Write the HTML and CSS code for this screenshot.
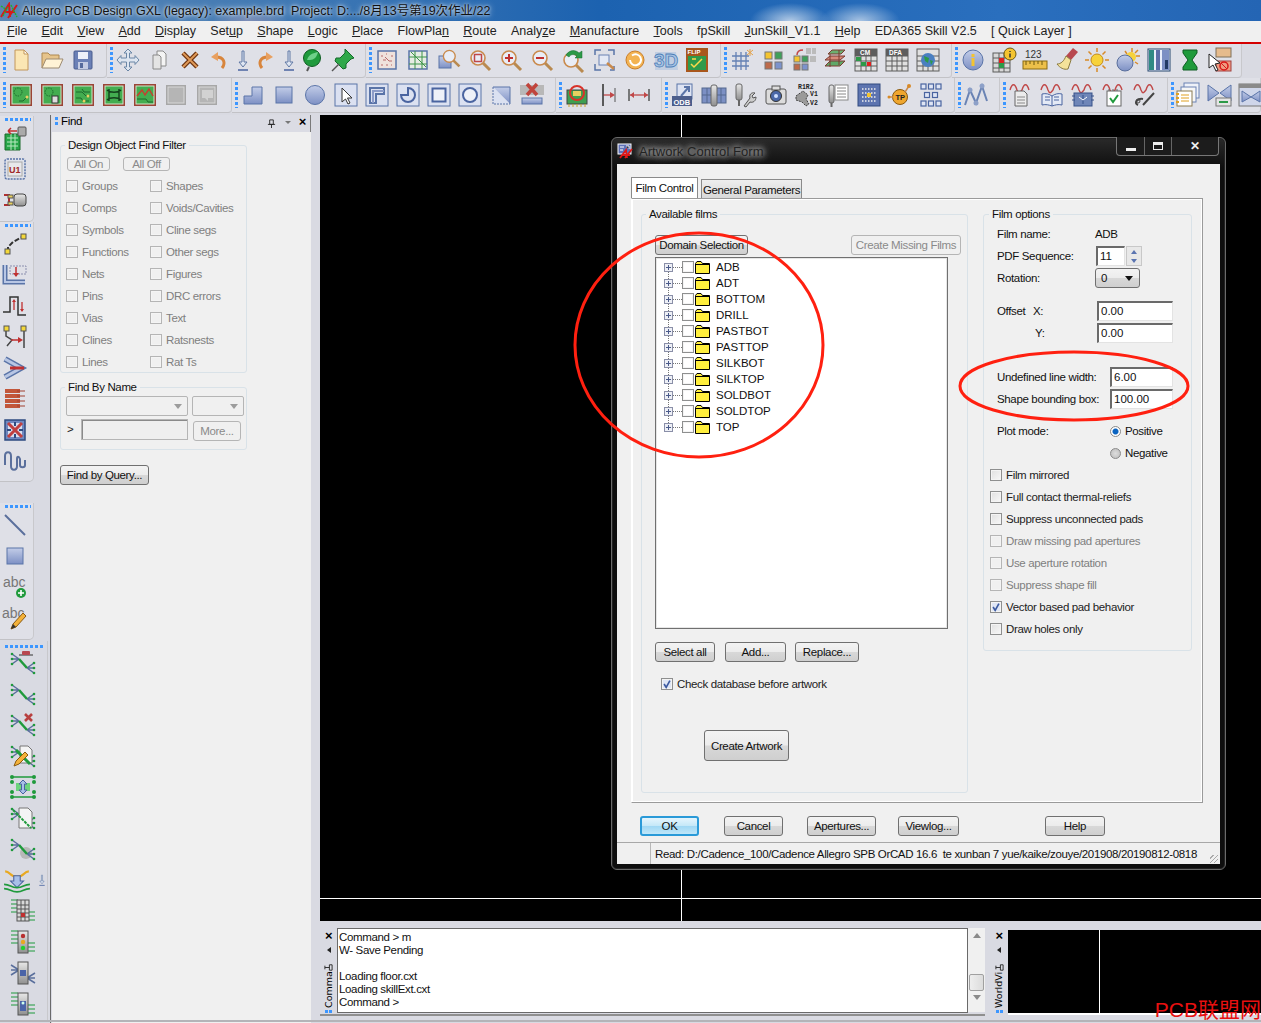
FILE: index.html
```html
<!DOCTYPE html>
<html lang="en">
<head>
<meta charset="utf-8">
<title>Allegro PCB Design GXL</title>
<link rel="stylesheet" href="styles.css">
</head>
<body>
<svg class="defs" aria-hidden="true">
<defs>
<linearGradient id="bl" x1="0" y1="0" x2="0" y2="1"><stop offset="0" stop-color="#c3cde8"/><stop offset="1" stop-color="#7d90c4"/></linearGradient>
<linearGradient id="gr" x1="0" y1="0" x2="0" y2="1"><stop offset="0" stop-color="#e8e8e8"/><stop offset="1" stop-color="#8f8f8f"/></linearGradient>
<symbol id="new" viewBox="0 0 26 26"><path d="M7 3h9l4 4v16H7z" fill="#fbe6b4" stroke="#c2965a"/><path d="M16 3v4h4z" fill="#fff" stroke="#c2965a"/></symbol>
<symbol id="open" viewBox="0 0 26 26"><path d="M3 21V6h6l2 2h9v4" fill="#e6c48c" stroke="#ad8850"/><path d="M3 21l4-9h17l-4 9z" fill="#fff3d6" stroke="#9c8a72"/></symbol>
<symbol id="save" viewBox="0 0 26 26"><rect x="4" y="4" width="18" height="18" rx="1" fill="#6b80b6" stroke="#4a5d8e"/><rect x="8" y="5" width="10" height="7" fill="#eef1fa"/><rect x="8" y="15" width="10" height="7" fill="#c3cbe2"/><rect x="10" y="16" width="3" height="5" fill="#566a9c"/></symbol>
<symbol id="move" viewBox="0 0 26 26"><path d="M13 2l4 4h-2.500v5H20V8.500l4 4.500-4 4.500V15h-5.500v5H17l-4 4-4-4h2.500v-5H6v2.500L2 13l4-4.500V11h5.500V6H9z" fill="#dde5f0" stroke="#6a86a6"/></symbol>
<symbol id="copy" viewBox="0 0 26 26"><path d="M11 4h6l3 3v12h-9z" fill="#f4f4f4" stroke="#8a8a8a"/><path d="M7 8h6l2 2v12H7z" fill="#e4e4e4" stroke="#8a8a8a"/></symbol>
<symbol id="del" viewBox="0 0 26 26"><path d="M6 6l14 14M20 6L6 20" stroke="#6e3410" stroke-width="4.500"/><path d="M6 6l14 14M20 6L6 20" stroke="#e09a58" stroke-width="1.800"/></symbol>
<symbol id="undo" viewBox="0 0 26 26"><path d="M17 21c4-5 2-11-6-11" fill="none" stroke="#d8853c" stroke-width="3"/><path d="M13 5l-7 5 7 4z" fill="#e8a060"/></symbol>
<symbol id="redo" viewBox="0 0 26 26"><path d="M9 21c-4-5-2-11 6-11" fill="none" stroke="#d8853c" stroke-width="3"/><path d="M13 5l7 5-7 4z" fill="#e8a060"/></symbol>
<symbol id="drop" viewBox="0 0 26 26"><path d="M12 4h2v11h3l-4 5-4-5h3z" fill="#dfe6f2" stroke="#6078a4"/><path d="M8 23h10" stroke="#4a65a0" stroke-width="1.500"/></symbol>
<symbol id="leaf" viewBox="0 0 26 26"><circle cx="13" cy="11" r="8.500" fill="#1f9a3c" stroke="#0e5c22"/><path d="M8 13c2-7 8-7 11-8-1 5-4 8-8 8" fill="#6fd08a"/><path d="M10 20l-2 4" stroke="#555" stroke-width="2"/></symbol>
<symbol id="pin" viewBox="0 0 26 26"><path d="M15 2l9 9-3 1-5 5 0 4-3 1-8-8 1-3 4 0 5-5z" fill="#2fa84a" stroke="#146a2a"/><path d="M9 17l-7 7" stroke="#555" stroke-width="1.500"/></symbol>
<symbol id="zr" viewBox="0 0 26 26"><rect x="4" y="4" width="18" height="18" fill="#efe2dc" stroke="#5a74a8" stroke-width="1.500"/><path d="M7 9h2M12 7h1M17 9h2M9 13h3M15 14h3M7 18h2M12 18h2M17 18h1M11 10l4 4" stroke="#b86a6a"/></symbol>
<symbol id="zg" viewBox="0 0 26 26"><rect x="4" y="4" width="18" height="18" fill="#e7ece4" stroke="#5a74a8" stroke-width="1.500"/><path d="M4 10h18M4 17h18M10 4v18M17 4v18M6 5l15 15" stroke="#3d9448"/></symbol>
<symbol id="mag" viewBox="0 0 26 26"><path d="M16 16l7 7" stroke="#b98a50" stroke-width="3"/><circle cx="11" cy="11" r="7" fill="#e9edf6" stroke="#c98a4c" stroke-width="1.600"/></symbol>
<symbol id="mg1" viewBox="0 0 26 26"><rect x="3" y="9" width="12" height="12" fill="url(#bl)" stroke="#5a74a8"/><use href="#mag" x="4" y="0" width="22" height="22"/></symbol>
<symbol id="mg2" viewBox="0 0 26 26"><use href="#mag"/><rect x="7.500" y="7.500" width="7" height="7" fill="none" stroke="#c04848" stroke-width="1.500"/></symbol>
<symbol id="mg3" viewBox="0 0 26 26"><use href="#mag"/><path d="M7 11h8M11 7v8" stroke="#c03030" stroke-width="2"/></symbol>
<symbol id="mg4" viewBox="0 0 26 26"><use href="#mag"/><path d="M7 11h8" stroke="#c03030" stroke-width="2"/></symbol>
<symbol id="mg5" viewBox="0 0 26 26"><use href="#mag" y="2"/><path d="M6 8c4-6 10-5 13-2l3-2v7h-7l2-2c-3-2-6-2-8 1z" fill="#2c9a48" stroke="#176a2e" stroke-width=".5"/></symbol>
<symbol id="mg6" viewBox="0 0 26 26"><path d="M4 8V3h6M17 3h6v5M4 17v6h6M23 19v4h-4" fill="none" stroke="#5a74a8" stroke-width="1.500"/><rect x="8" y="8" width="10" height="10" fill="#e4e9f5" stroke="#6a82b4"/><path d="M16 16l7 6" stroke="#c98a4c" stroke-width="2.500"/></symbol>
<symbol id="back" viewBox="0 0 26 26"><circle cx="13" cy="13" r="9" fill="#f3b352" stroke="#c97e2a"/><path d="M8 13a5.500 5.500 0 1 0 2-4.500" fill="none" stroke="#fff" stroke-width="2"/></symbol>
<symbol id="d3" viewBox="0 0 26 26"><path d="M2 23V5h21l2 18z" fill="#a8c0de" opacity=".55"/><text x="1" y="20" class="t3d">3D</text></symbol>
<symbol id="flip" viewBox="0 0 26 26"><rect x="2" y="1" width="22" height="7" fill="#a8571c"/><text x="3.500" y="7" class="tflip">FLIP</text><rect x="3" y="8" width="20" height="16" fill="#2f9a4a" stroke="#a8571c" stroke-width="2"/><path d="M7 17l3 3 8-8M8 12h4" stroke="#ffd94a" fill="none" stroke-width="1.500"/></symbol>
<symbol id="grid" viewBox="0 0 26 26"><path d="M3 9h17M3 14h17M3 19h17M7 5v18M12 5v18M17 5v18" stroke="#6480b4" stroke-width="1.300"/><path d="M21 2v7M18 3l6 5M24 3l-6 5" stroke="#e3a24a"/></symbol>
<symbol id="col4" viewBox="0 0 26 26"><rect x="5" y="5" width="7" height="7" fill="#f4c430" stroke="#777"/><rect x="15" y="5" width="7" height="7" fill="#3fa05a" stroke="#777"/><rect x="5" y="15" width="7" height="7" fill="#bd6a4a" stroke="#777"/><rect x="15" y="15" width="7" height="7" fill="#7c93cc" stroke="#777"/></symbol>
<symbol id="col6" viewBox="0 0 26 26"><rect x="15" y="1" width="5" height="6" fill="#bbb"/><rect x="21" y="1" width="4" height="6" fill="#bbb"/><rect x="19" y="9" width="6" height="6" fill="#bbb"/><rect x="3" y="9" width="6" height="6" fill="#f4c430" stroke="#777"/><rect x="11" y="9" width="6" height="6" fill="#3fa05a" stroke="#777"/><rect x="3" y="17" width="6" height="6" fill="#bd6a4a" stroke="#777"/><rect x="11" y="17" width="6" height="6" fill="#7c93cc" stroke="#777"/><path d="M6 8c0-4 3-5 6-5" fill="none" stroke="#c04848" stroke-width="1.500"/></symbol>
<symbol id="layers" viewBox="0 0 26 26"><path d="M3 19l5-5h15l-5 5z" fill="#5fa868" stroke="#7c3a30"/><path d="M3 13l5-4h15l-5 4z" fill="#d98a7a" stroke="#7c3a30"/><path d="M6 7l4-4h13l-4 4z" fill="#6cb070" stroke="#7c3a30"/><path d="M8 7v13M17 3v15" stroke="#7c3a30"/></symbol>
<symbol id="tbl" viewBox="0 0 26 26"><rect x="2" y="2" width="22" height="22" fill="#e0e0e0" stroke="#5d5d5d"/><path d="M2 9h22M2 14h22M2 19h22M8 9v15M13 9v15M18 9v15" stroke="#5d5d5d"/></symbol>
<symbol id="cm" viewBox="0 0 26 26"><use href="#tbl"/><rect x="2" y="2" width="22" height="7" fill="#5d5d5d"/><text x="7" y="8.300" class="tw">CM</text><rect x="3" y="10" width="5" height="4" fill="#2c9a48"/><rect x="14" y="15" width="4" height="4" fill="#e02020"/><rect x="8" y="15" width="5" height="4" fill="#2c9a48"/></symbol>
<symbol id="dfa" viewBox="0 0 26 26"><use href="#tbl"/><rect x="2" y="2" width="22" height="7" fill="#5d5d5d"/><text x="5" y="8.300" class="tw">DFA</text></symbol>
<symbol id="gtbl" viewBox="0 0 26 26"><use href="#tbl"/><circle cx="13" cy="13" r="7" fill="#4a7fc0"/><path d="M9 9l5 2-1 5-3-2zM15 13l3 1-2 4z" fill="#2c9a48"/></symbol>
<symbol id="info" viewBox="0 0 26 26"><circle cx="13" cy="13" r="10" fill="url(#bl)" stroke="#5a74a8"/><rect x="11.500" y="7" width="3" height="3" fill="#f4c430"/><rect x="11.500" y="11" width="3" height="8" fill="#f4c430"/></symbol>
<symbol id="tinfo" viewBox="0 0 26 26"><rect x="2" y="6" width="17" height="19" fill="#d8d8d8" stroke="#5d5d5d"/><path d="M2 11h17M2 16h17M2 21h17M8 6v19M13 6v19" stroke="#5d5d5d"/><rect x="8" y="11" width="5" height="5" fill="#e02020"/><rect x="8" y="16" width="5" height="5" fill="#2c9a48"/><circle cx="19" cy="7" r="6" fill="#f4c430" stroke="#6e5a10"/><path d="M19 4v1M19 6.500v4" stroke="#333" stroke-width="1.500"/></symbol>
<symbol id="rule" viewBox="0 0 26 26"><text x="3" y="11" class="t123">123</text><rect x="1" y="14" width="24" height="8" fill="#edc04a" stroke="#8a6a10"/><path d="M4 14v4M8 14v3M12 14v4M16 14v3M20 14v4" stroke="#6e5a10"/></symbol>
<symbol id="broom" viewBox="0 0 26 26"><path d="M20 1l5 4-7 8-5-4z" fill="#b84850"/><path d="M13 9l5 4-3 9c-4 1-8-1-11-5 4 0 7-3 9-8z" fill="#f4e29a" stroke="#8a7a40"/></symbol>
<symbol id="sun" viewBox="0 0 26 26"><circle cx="13" cy="13" r="6" fill="#f7d23a" stroke="#c48a1c"/><path d="M13 1v4M13 21v4M1 13h4M21 13h4M4.500 4.500l3 3M18.500 18.500l3 3M21.500 4.500l-3 3M4.500 21.500l3-3" stroke="#d88a28" stroke-width="1.500"/></symbol>
<symbol id="bulb" viewBox="0 0 26 26"><path d="M17 1v4M25 9h-4M10 4l2 3M23 3l-3 3M23 17l-3-2" stroke="#d88a28" stroke-width="1.500"/><circle cx="16" cy="10" r="5" fill="#f7d23a"/><circle cx="10" cy="16" r="8" fill="url(#bl)" stroke="#5a6f9c"/></symbol>
<symbol id="bars" viewBox="0 0 26 26"><rect x="2" y="2" width="22" height="22" fill="#e8eefb" stroke="#27466f"/><rect x="3" y="3" width="5" height="20" fill="#2f8a84"/><rect x="10" y="3" width="4" height="20" fill="#5c6fa8"/><rect x="16" y="3" width="7" height="20" fill="#7c90c4"/><rect x="19" y="13" width="3" height="9" fill="#223a64"/></symbol>
<symbol id="hour" viewBox="0 0 26 26"><path d="M6 3h14v3l-5 7 5 7v3H6v-3l5-7-5-7z" fill="#1f9a3c" stroke="#0e5c22"/></symbol>
<symbol id="stop" viewBox="0 0 26 26"><rect x="8" y="1" width="15" height="9" fill="#e6bb8c" stroke="#80705a"/><rect x="8" y="14" width="15" height="10" fill="#ee9a80" stroke="#a04040"/><circle cx="16" cy="19" r="4" fill="none" stroke="#d81818" stroke-width="1.500"/><path d="M13 16l6 6" stroke="#d81818"/><path d="M1 7v14l4-3 3 6 2-1-3-6 5-1z" fill="#fff" stroke="#222"/></symbol>
<symbol id="bd" viewBox="0 0 26 26"><rect x="2" y="2" width="22" height="22" fill="#9a4436"/><rect x="4" y="4" width="18" height="18" fill="#43ad50" stroke="#cfe4c8"/></symbol>
<symbol id="b1" viewBox="0 0 26 26"><use href="#bd"/><circle cx="10" cy="10" r="4" fill="none" stroke="#1c6a2c" stroke-dasharray="1.500 1"/><path d="M11 19h4l4-4" stroke="#1c6a2c" fill="none"/><circle cx="19" cy="15" r="1.500" fill="#e8d060"/></symbol>
<symbol id="b2" viewBox="0 0 26 26"><use href="#bd"/><circle cx="10" cy="10" r="4" fill="none" stroke="#1c6a2c" stroke-dasharray="1.500 1"/><rect x="13" y="14" width="6" height="7" fill="#ddd" stroke="#333"/></symbol>
<symbol id="b3" viewBox="0 0 26 26"><use href="#bd"/><path d="M6 10h6l4 4h4M6 16h5l2 3h6M12 7l2 3h6" stroke="#1c6a2c" fill="none"/><circle cx="18" cy="14" r="1.500" fill="#e8d060"/><circle cx="14" cy="19" r="1.500" fill="#e8d060"/></symbol>
<symbol id="b4" viewBox="0 0 26 26"><use href="#bd"/><path d="M6 8c3 3 11 3 14 0M6 18c3-3 11-3 14 0M8 7v12M18 7v12" stroke="#14401c" fill="none" stroke-width="1.400"/></symbol>
<symbol id="b5" viewBox="0 0 26 26"><use href="#bd"/><path d="M5 14l5-6 3 5 4-6 4 7" stroke="#c83c30" fill="none" stroke-width="1.400"/><path d="M5 17h9l2 3h5" stroke="#1c6a2c" fill="none"/></symbol>
<symbol id="g1" viewBox="0 0 26 26"><rect x="3" y="3" width="20" height="20" fill="#a7a7a7"/><rect x="5" y="5" width="16" height="16" fill="#b5b5b5" stroke="#d8d8d8"/></symbol>
<symbol id="g2" viewBox="0 0 26 26"><use href="#g1"/><path d="M8 8h11v8h-5v3l-3-3H8z" fill="#d2d2d2"/></symbol>
<symbol id="sL" viewBox="0 0 26 26"><path d="M4 22V14h8V5h10v17z" fill="url(#bl)" stroke="#5a74a8"/></symbol>
<symbol id="sS" viewBox="0 0 26 26"><rect x="5" y="5" width="16" height="16" fill="url(#bl)" stroke="#5a74a8"/></symbol>
<symbol id="sC" viewBox="0 0 26 26"><circle cx="13" cy="13" r="9.500" fill="url(#bl)" stroke="#5a74a8"/></symbol>
<symbol id="sel" viewBox="0 0 26 26"><rect x="2" y="2" width="22" height="22" fill="#dbe1f1" stroke="#5a74a8"/><path d="M9 6v14l3.500-3 2.500 5 2-1-2.500-5H19z" fill="#fff" stroke="#333"/></symbol>
<symbol id="fr" viewBox="0 0 26 26"><rect x="2" y="2" width="22" height="22" fill="#dbe1f1" stroke="#5a74a8"/></symbol>
<symbol id="sN" viewBox="0 0 26 26"><use href="#fr"/><path d="M6 21V6h14v6H12v9z" fill="none" stroke="#5a74a8" stroke-width="2"/><path d="M9 21V9h11" fill="none" stroke="#8c9cc8" stroke-width="2"/></symbol>
<symbol id="sP" viewBox="0 0 26 26"><use href="#fr"/><path d="M13 6a7 7 0 1 1-7 7h7z" fill="none" stroke="#4a64a0" stroke-width="2"/></symbol>
<symbol id="sH" viewBox="0 0 26 26"><use href="#fr"/><rect x="6.500" y="6.500" width="13" height="13" fill="#eef1f8" stroke="#4a64a0" stroke-width="2"/></symbol>
<symbol id="sO" viewBox="0 0 26 26"><use href="#fr"/><circle cx="13" cy="13" r="7" fill="#eef1f8" stroke="#4a64a0" stroke-width="2"/></symbol>
<symbol id="sD" viewBox="0 0 26 26"><path d="M5 5h17v17z" fill="url(#bl)"/><path d="M5 5v17h17" fill="#dbe1f1" stroke="#5a74a8" stroke-dasharray="2 1"/><path d="M5 5h17v17" fill="none" stroke="#5a74a8"/></symbol>
<symbol id="sX" viewBox="0 0 26 26"><rect x="1" y="3" width="24" height="10" fill="#b8b8b8"/><rect x="3" y="16" width="20" height="6" fill="url(#bl)" stroke="#5a74a8"/><path d="M8 2l10 11M18 2L8 13" stroke="#c0443c" stroke-width="3.500"/></symbol>
<symbol id="chip" viewBox="0 0 26 26"><rect x="3" y="8" width="20" height="14" fill="#3fa050" stroke="#444"/><path d="M5 22v3M9 22v3M13 22v3M17 22v3M21 22v3" stroke="#c8a428"/><ellipse cx="13" cy="11" rx="7" ry="7" fill="none" stroke="#d8322a" stroke-width="2"/><rect x="9" y="9" width="8" height="5" fill="#e8d060"/></symbol>
<symbol id="dimv" viewBox="0 0 26 26"><path d="M8 2v22M20 6v14" stroke="#555" fill="none"/><path d="M8 13h10" stroke="#c04848" stroke-width="1.300"/><path d="M15 10l5 3-5 3z" fill="#c04848"/><path d="M8 2v22" stroke="#444" stroke-width="1.500"/></symbol>
<symbol id="dimh" viewBox="0 0 26 26"><path d="M3 7v12M23 7v12" stroke="#555" stroke-width="1.500"/><path d="M4 13h18" stroke="#c04848" stroke-width="1.300"/><path d="M8 10l-4 3 4 3zM18 10l4 3-4 3z" fill="#c04848"/></symbol>
<symbol id="odb" viewBox="0 0 26 26"><rect x="7" y="2" width="15" height="15" fill="#dde3f2" stroke="#5a74a8"/><path d="M11 14l7-8M14 5h5v5" stroke="#5a74a8" stroke-width="2" fill="none"/><rect x="2" y="14" width="20" height="10" fill="#4c5e8c"/><text x="3.500" y="22.500" class="todb">ODB</text></symbol>
<symbol id="split" viewBox="0 0 26 26"><rect x="1" y="6" width="10" height="15" fill="#7c90c4" stroke="#54688f"/><rect x="15" y="6" width="10" height="15" fill="#7c90c4" stroke="#54688f"/><path d="M1 13h10M15 13h10M6 6v15M20 6v15" stroke="#54688f"/><rect x="10" y="3" width="6" height="21" rx="2" fill="url(#gr)" stroke="#666"/></symbol>
<symbol id="wr" viewBox="0 0 26 26"><rect x="4" y="2" width="6" height="16" rx="2" fill="url(#gr)" stroke="#666"/><path d="M7 18v6" stroke="#666" stroke-width="2"/><path d="M12 24l6-8c-1-3 1-6 5-5l-3 3 1 2 3-1c0 4-3 6-6 5l-4 5z" fill="#ccc" stroke="#555"/></symbol>
<symbol id="cam" viewBox="0 0 26 26"><rect x="3" y="7" width="20" height="15" rx="2" fill="#dcdcdc" stroke="#555"/><rect x="9" y="4" width="8" height="4" fill="#dcdcdc" stroke="#555"/><circle cx="13" cy="14" r="5.500" fill="#4a68a8" stroke="#333"/><circle cx="13" cy="14" r="2" fill="#cfe0ff"/></symbol>
<symbol id="rv" viewBox="0 0 26 26"><text x="4" y="7" class="tsm">R1R2</text><text x="16" y="14" class="tsm">V1</text><text x="16" y="23" class="tsm">V2</text><path d="M2 14l7-5 5 4-2 4 3 5-3 2-4-4-6-2z" fill="#9a9a9a" stroke="#444" stroke-dasharray="2 1"/></symbol>
<symbol id="lst" viewBox="0 0 26 26"><rect x="4" y="3" width="5" height="18" rx="2" fill="url(#gr)" stroke="#666"/><path d="M6.500 21v4" stroke="#666" stroke-width="2"/><rect x="10" y="3" width="13" height="15" fill="#fff" stroke="#888"/><path d="M12 6h9M12 9h9M12 12h9M12 15h9" stroke="#888"/></symbol>
<symbol id="dots" viewBox="0 0 26 26"><rect x="2" y="2" width="22" height="22" fill="#5d74b0" stroke="#324a80"/><path d="M6 7h14M6 11h14M6 15h14M6 19h14" stroke="#eee" stroke-width="1.500" stroke-dasharray="1.500 1.500"/><path d="M11 11h4v4h-4z" fill="#f4c430"/></symbol>
<symbol id="tp" viewBox="0 0 26 26"><circle cx="13" cy="15" r="7.500" fill="#efa62e" stroke="#8a5a10"/><text x="8.500" y="18" class="ttp">TP</text><path d="M18 10l4-6M2 15h4" stroke="#c98a4c" stroke-width="1.500"/><circle cx="22" cy="4" r="2" fill="#d88a28"/><circle cx="2" cy="15" r="1.500" fill="#d88a28"/></symbol>
<symbol id="nine" viewBox="0 0 26 26"><g fill="#dfe5f4" stroke="#4a64a0" stroke-width="1.200"><rect x="3" y="2" width="5" height="5"/><rect x="10.500" y="2" width="5" height="5"/><rect x="18" y="2" width="5" height="5"/><rect x="6.500" y="10.500" width="5" height="5"/><rect x="14.500" y="10.500" width="5" height="5"/><rect x="3" y="19" width="5" height="5"/><rect x="10.500" y="19" width="5" height="5"/><rect x="18" y="19" width="5" height="5"/></g></symbol>
<symbol id="nl" viewBox="0 0 26 26"><path d="M2 23l5-15 6 13 6-17 5 15" fill="none" stroke="#6a83b4" stroke-width="2"/><g fill="#8da0c8"><circle cx="7" cy="8" r="2.500"/><circle cx="13" cy="21" r="2.500"/><circle cx="19" cy="4" r="2.500"/></g></symbol>
<symbol id="sine" viewBox="0 0 26 26"><path d="M2 8c2-7 5-7 7 0 2 5 3 2 5 0 2-7 5-7 7 0" fill="none" stroke="#c04848" stroke-width="1.400"/></symbol>
<symbol id="si1" viewBox="0 0 26 26"><use href="#sine"/><path d="M7 9h9l3 3v12H7z" fill="#ececec" stroke="#666"/><path d="M9 15h8M9 18h8M9 21h8" stroke="#888"/></symbol>
<symbol id="si2" viewBox="0 0 26 26"><use href="#sine"/><path d="M3 12c4-1 7 0 10 2 3-2 6-3 10-2v11c-4-1-7 0-10 1-3-1-6-2-10-1z" fill="#e4eaf6" stroke="#4a64a0"/><path d="M13 14v10M6 15h5M6 18h5M15 15h5M15 18h5" stroke="#4a64a0"/></symbol>
<symbol id="si3" viewBox="0 0 26 26"><use href="#sine"/><rect x="4" y="11" width="18" height="13" fill="#6f86b8" stroke="#39528a"/><path d="M2 14h3M2 18h3M21 14h3M21 18h3M13 13v9" stroke="#39528a"/><path d="M9 15l4 3 4-3" fill="none" stroke="#fff"/></symbol>
<symbol id="si4" viewBox="0 0 26 26"><use href="#sine"/><rect x="6" y="9" width="14" height="15" fill="#fff" stroke="#666"/><path d="M9 16l3 4 5-7" fill="none" stroke="#1f9a3c" stroke-width="2"/><path d="M8 9V7M12 9V7M16 9V7" stroke="#666"/></symbol>
<symbol id="si5" viewBox="0 0 26 26"><use href="#sine"/><path d="M22 11L11 23M6 23c-5-2 0-7 5-6" fill="none" stroke="#444" stroke-width="2"/><circle cx="6" cy="19" r="2" fill="none" stroke="#444"/></symbol>
<symbol id="nb" viewBox="0 0 26 26"><rect x="8" y="1" width="15" height="15" fill="#eef1f8" stroke="#6a82b4"/><rect x="5" y="5" width="15" height="15" fill="#f6f6f6" stroke="#6a82b4"/><rect x="1" y="9" width="15" height="15" fill="#fff" stroke="#8a7a50"/><path d="M3 12h-3M3 16h-3M3 20h-3" stroke="#e0a020" stroke-width="2"/><path d="M5 13h8M5 16h8M5 19h8" stroke="#e0a020"/></symbol>
<symbol id="bow" viewBox="0 0 26 26"><path d="M1 3l11 8L1 19zM24 3l-11 8 11 8z" fill="url(#bl)" stroke="#5a74a8"/><rect x="9" y="16" width="15" height="8" fill="#e4e4e4" stroke="#777"/><rect x="12" y="19" width="9" height="2" fill="#2c9a48"/></symbol>
<symbol id="win" viewBox="0 0 26 26"><rect x="1" y="2" width="24" height="22" fill="#cfd6ea" stroke="#777"/><rect x="1" y="2" width="24" height="4" fill="#8a8a8a"/><path d="M4 9l9 6 9-6v11l-9-5-9 5z" fill="url(#bl)" stroke="#5a74a8"/></symbol>
<symbol id="l1" viewBox="0 0 26 26"><path d="M3 9h15v16H3z" fill="#26a548" stroke="#1c6a2c"/><path d="M5 13h11M5 17h11M5 21h11M9 9v16M13 9v16" stroke="#b8e8c0"/><rect x="16" y="2" width="8" height="9" rx="1" fill="#aaa" stroke="#555"/><path d="M6 6h9M6 6l3-3M6 6l3 3" stroke="#c03030" fill="none" stroke-width="1.500"/></symbol>
<symbol id="l2" viewBox="0 0 26 26"><rect x="3" y="3" width="20" height="20" rx="2" fill="#dfe2ea" stroke="#5a74a8" stroke-dasharray="2 1" stroke-width="1.500"/><rect x="6" y="6" width="14" height="14" fill="#e8e8ea" stroke="#aaa"/><text x="7" y="16.500" class="tu1">U1</text></symbol>
<symbol id="l3" viewBox="0 0 26 26"><rect x="12" y="7" width="12" height="12" rx="3" fill="url(#gr)" stroke="#444"/><path d="M2 8h5v10H2" fill="none" stroke="#b03030" stroke-width="2"/><rect x="6" y="8" width="5" height="3" fill="#e8d060" stroke="#555"/><rect x="6" y="15" width="5" height="3" fill="#e8d060" stroke="#555"/></symbol>
<symbol id="l4" viewBox="0 0 26 26"><path d="M6 21v-5l5-5 9-5" fill="none" stroke="#333" stroke-width="2" stroke-dasharray="5 2"/><rect x="3" y="18" width="5" height="5" fill="#f4d83a" stroke="#555"/><rect x="19" y="3" width="5" height="5" fill="#f4d83a" stroke="#555"/></symbol>
<symbol id="l5" viewBox="0 0 26 26"><path d="M3 3v17h20" fill="none" stroke="#5a74a8" stroke-width="5"/><path d="M3 3v17h20" fill="none" stroke="#b8c6e4" stroke-width="2"/><rect x="8" y="4" width="16" height="8" fill="none" stroke="#8b8fae" stroke-dasharray="2 1"/><path d="M14 5v9" stroke="#c03030" stroke-width="1.500"/><path d="M11 11l3 4 3-4z" fill="#c03030"/></symbol>
<symbol id="l6" viewBox="0 0 26 26"><path d="M1 19h7V4h8v18h8" fill="none" stroke="#333" stroke-width="1.500"/><path d="M12 17V8M20 9v9" stroke="#c03030" stroke-width="1.300"/><path d="M10 9l2-3 2 3zM18 16l2 3 2-3z" fill="#c03030"/></symbol>
<symbol id="l7" viewBox="0 0 26 26"><path d="M4 6v6l6 4-5 6M22 6v18" fill="none" stroke="#444" stroke-width="1.500"/><path d="M9 16h10" stroke="#c03030" stroke-width="1.500"/><path d="M16 13l5 3-5 3z" fill="#c03030"/><rect x="2" y="2" width="5" height="5" fill="#f4d83a" stroke="#555"/><rect x="19" y="2" width="5" height="5" fill="#f4d83a" stroke="#555"/></symbol>
<symbol id="l8" viewBox="0 0 26 26"><path d="M3 4l16 9-16 9" fill="none" stroke="#5a74a8" stroke-width="6"/><path d="M3 4l16 9-16 9" fill="none" stroke="#b8c6e4" stroke-width="3"/><path d="M8 13h14" stroke="#c03030" stroke-width="3"/></symbol>
<symbol id="l9" viewBox="0 0 26 26"><path d="M3 5h15M3 10h15M3 15h15M3 20h15" stroke="#c2563a" stroke-width="4"/><path d="M15 5h8M15 10h8M15 15h8M15 20h8" stroke="#a04030"/></symbol>
<symbol id="l10" viewBox="0 0 26 26"><rect x="3" y="3" width="20" height="20" fill="#7088c0" stroke="#2e4a80" stroke-width="1.500"/><rect x="6" y="6" width="14" height="14" fill="#d6def0"/><path d="M6 6l14 14M20 6L6 20" stroke="#c04040" stroke-width="3"/><path d="M5 13h4M17 13h4M13 5v4M13 17v4" stroke="#2e4a80" stroke-width="2"/></symbol>
<symbol id="l11" viewBox="0 0 26 26"><path d="M3 17V8c0-5 6-5 6 0v10c0 5 6 5 6 0v-7c0-3 2-3 3 0v6c0 3 5 3 5 0v-5" fill="none" stroke="#5a6f9c" stroke-width="2"/></symbol>
<symbol id="ln" viewBox="0 0 26 26"><path d="M3 3l20 20" stroke="#5a6f9c" stroke-width="2"/></symbol>
<symbol id="ab1" viewBox="0 0 26 26"><text x="1" y="13" class="tabc">abc</text><circle cx="19" cy="19" r="5" fill="#1f9a3c"/><path d="M16 19h6M19 16v6" stroke="#fff" stroke-width="1.600"/></symbol>
<symbol id="pen" viewBox="0 0 26 26"><path d="M9 24l2-5 10-11 3 3-10 11z" fill="#f4b23a" stroke="#8a5a10"/><path d="M9 24l2-5 3 3z" fill="#333"/></symbol>
<symbol id="ab2" viewBox="0 0 26 26"><text x="0" y="13" class="tabc">abc</text><use href="#pen"/></symbol>
<symbol id="net" viewBox="0 0 26 26"><g stroke="#5a6f9c" stroke-width="1.500" fill="none"><path d="M2 4l7 5M2 9h7M2 14l7-5M24 13l-7 5M24 18h-7M24 23l-7-5"/></g><path d="M9 9l8 9" stroke="#1f9a3c" stroke-width="2.500"/><g fill="#1f9a3c"><circle cx="2" cy="4" r="1.300"/><circle cx="2" cy="9" r="1.300"/><circle cx="2" cy="14" r="1.300"/><circle cx="24" cy="13" r="1.300"/><circle cx="24" cy="18" r="1.300"/><circle cx="24" cy="23" r="1.300"/></g></symbol>
<symbol id="n1" viewBox="0 0 26 26"><use href="#net"/><path d="M9 5h14" stroke="#333" stroke-width="1"/><rect x="12" y="1" width="8" height="4" rx="1" fill="#b84850"/></symbol>
<symbol id="n3" viewBox="0 0 26 26"><use href="#net"/><path d="M15 2l7 7M22 2l-7 7" stroke="#b84040" stroke-width="2.600"/></symbol>
<symbol id="n4" viewBox="0 0 26 26"><use href="#net"/><path d="M10 3h8l4 4v13H10z" fill="#f4f4f4" stroke="#777"/><path d="M6 7l14 14" stroke="#1f9a3c" stroke-width="3"/><path d="M4 23l2-5 9-9 3 3-9 9z" fill="#f4b23a" stroke="#8a5a10"/></symbol>
<symbol id="n5" viewBox="0 0 26 26"><path d="M2 3h22M2 23h22" stroke="#1f9a3c" stroke-width="1.500"/><g fill="#1f9a3c"><circle cx="2" cy="3" r="2"/><circle cx="2" cy="8" r="2"/><circle cx="2" cy="18" r="2"/><circle cx="2" cy="23" r="2"/><circle cx="24" cy="3" r="2"/><circle cx="24" cy="8" r="2"/><circle cx="24" cy="18" r="2"/><circle cx="24" cy="23" r="2"/></g><path d="M6 9h14v8H6z" fill="#6cd47c"/><path d="M13 6l4 4h-2.500v6H17l-4 4-4-4h2.500v-6H9z" fill="#a8c0e8" stroke="#4a64a0"/></symbol>
<symbol id="n6" viewBox="0 0 26 26"><use href="#net"/><path d="M9 3h9l4 4v16H9z" fill="#f4f4f4" stroke="#777"/><path d="M3 5l18 18" stroke="#1f9a3c" stroke-width="2" stroke-dasharray="3 1"/></symbol>
<symbol id="n7" viewBox="0 0 26 26"><circle cx="16" cy="17" r="6" fill="#b8b8b8"/><use href="#net"/></symbol>
<symbol id="n8" viewBox="0 0 26 26"><path d="M2 5c5 0 4 5 11 5s6-5 11-5" fill="none" stroke="#e8a820" stroke-width="2"/><path d="M10 9h6v5h3l-6 6-6-6h3z" fill="#a8c0e8" stroke="#4a64a0"/><path d="M1 17c6 0 6 3 12 3s6-3 12-3M1 21c6 0 6 3 12 3s6-3 12-3" fill="none" stroke="#1f9a3c" stroke-width="1.600"/></symbol>
<symbol id="fan" viewBox="0 0 26 26"><g stroke="#1f9a3c" stroke-width="1.200" fill="#1f9a3c"><path d="M1 2h7M1 6h7M1 10h7M1 14h7M18 14h7M18 18h7M18 22h7"/></g></symbol>
<symbol id="n9" viewBox="0 0 26 26"><use href="#fan"/><rect x="7" y="2" width="12" height="21" fill="#d8d8d8" stroke="#555"/><path d="M7 7h12M7 11h12M7 15h12M7 19h12M11 2v21M15 2v21" stroke="#555"/><rect x="11" y="15" width="4" height="4" fill="#c03030"/></symbol>
<symbol id="n10" viewBox="0 0 26 26"><use href="#fan"/><rect x="8" y="2" width="10" height="22" fill="url(#gr)" stroke="#555"/><circle cx="13" cy="7" r="2.200" fill="#b83030"/><circle cx="13" cy="13" r="2.200" fill="#e8a820"/><circle cx="13" cy="19" r="2.200" fill="#22d030"/></symbol>
<symbol id="n11" viewBox="0 0 26 26"><g stroke="#5a6f9c" stroke-width="1.500"><path d="M1 5l8 5M1 10h8M1 15l8-5M25 13l-8 5M25 18h-8M25 23l-8-5"/></g><rect x="8" y="2" width="10" height="22" fill="url(#gr)" stroke="#555"/><rect x="10" y="10" width="6" height="6" fill="#4a64a8"/></symbol>
<symbol id="n12" viewBox="0 0 26 26"><use href="#fan"/><rect x="8" y="2" width="10" height="22" fill="url(#gr)" stroke="#555"/><rect x="10" y="10" width="6" height="10" fill="#4a64a8"/><circle cx="13" cy="12" r="1.500" fill="#cfe"/></symbol>
<symbol id="chk" viewBox="0 0 12 12"><path d="M2.500 6l2.500 4 4.500-8" fill="none" stroke="#3c5aa0" stroke-width="2"/></symbol>
<symbol id="foldr" viewBox="0 0 15 13"><path d="M.5 12.500V2.500l1.500-2h4l1.500 2h7v10z" fill="#ffef3e" stroke="#000"/><path d="M.5 3.500h14" stroke="#000"/></symbol>
<symbol id="logo" viewBox="0 0 18 18"><path d="M1 15L9 2l1 13M5 10h10M8 16l9-13" fill="none" stroke="#d81818" stroke-width="2"/><path d="M1 4l6 4M3 14l5-9M11 3l6 12" fill="none" stroke="#20b030" stroke-width="1.500" stroke-dasharray="2 1"/></symbol>
<symbol id="dlogo" viewBox="0 0 16 16"><rect x="1" y="1" width="13" height="10" fill="#6072b8" stroke="#fff"/><path d="M3 4h4M3 7h3M9 3h3v3" stroke="#fff"/><path d="M3 15L9 7l1 8M5 12h8M8 15l7-9" fill="none" stroke="#e01818" stroke-width="1.800"/></symbol>
</defs>
</svg>

<div class="app">
  <header class="titlebar">
    <svg class="tlogo"><use href="#logo"/></svg>
    <span class="ttext">Allegro PCB Design GXL (legacy): example.brd&nbsp; Project: D:.../8月13号第19次作业/22</span>
  </header>
  <nav class="menubar">
    <span class="m m0"><u>F</u>ile</span><span class="m"><u>E</u>dit</span><span class="m"><u>V</u>iew</span><span class="m"><u>A</u>dd</span><span class="m"><u>D</u>isplay</span><span class="m">Set<u>u</u>p</span><span class="m"><u>S</u>hape</span><span class="m"><u>L</u>ogic</span><span class="m"><u>P</u>lace</span><span class="m">FlowPla<u>n</u></span><span class="m"><u>R</u>oute</span><span class="m">Analy<u>z</u>e</span><span class="m"><u>M</u>anufacture</span><span class="m"><u>T</u>ools</span><span class="m">fpSkill</span><span class="m"><u>J</u>unSkill_V1.1</span><span class="m"><u>H</u>elp</span><span class="m">EDA365 Skill V2.5</span><span class="m">[ Quick Layer ]</span>
  </nav>
  <div class="toolbars">
    <div class="tbrow r1">
      <div class="grp g1a"><i class="hd"></i><span class="b"><svg class="ic"><use href="#new"/></svg></span><span class="b"><svg class="ic"><use href="#open"/></svg></span><span class="b"><svg class="ic"><use href="#save"/></svg></span></div>
      <div class="grp g1b"><i class="hd"></i><span class="b"><svg class="ic"><use href="#move"/></svg></span><span class="b"><svg class="ic"><use href="#copy"/></svg></span><span class="b"><svg class="ic"><use href="#del"/></svg></span><span class="b w26"><svg class="ic"><use href="#undo"/></svg></span><span class="b w23"><svg class="ic"><use href="#drop"/></svg></span><span class="b w23"><svg class="ic"><use href="#redo"/></svg></span><span class="b w23"><svg class="ic"><use href="#drop"/></svg></span><span class="b w23"><svg class="ic"><use href="#leaf"/></svg></span><span class="b w39"><svg class="ic"><use href="#pin"/></svg></span></div>
      <div class="grp g1c"><i class="hd"></i><span class="b"><svg class="ic"><use href="#zr"/></svg></span><span class="b"><svg class="ic"><use href="#zg"/></svg></span><span class="b"><svg class="ic"><use href="#mg1"/></svg></span><span class="b"><svg class="ic"><use href="#mg2"/></svg></span><span class="b"><svg class="ic"><use href="#mg3"/></svg></span><span class="b"><svg class="ic"><use href="#mg4"/></svg></span><span class="b"><svg class="ic"><use href="#mg5"/></svg></span><span class="b"><svg class="ic"><use href="#mg6"/></svg></span><span class="b"><svg class="ic"><use href="#back"/></svg></span><span class="b"><svg class="ic"><use href="#d3"/></svg></span><span class="b"><svg class="ic"><use href="#flip"/></svg></span></div>
      <div class="grp g1d"><i class="hd"></i><span class="b"><svg class="ic"><use href="#grid"/></svg></span><span class="b"><svg class="ic"><use href="#col4"/></svg></span><span class="b"><svg class="ic"><use href="#col6"/></svg></span><span class="b"><svg class="ic"><use href="#layers"/></svg></span><span class="b"><svg class="ic"><use href="#cm"/></svg></span><span class="b"><svg class="ic"><use href="#dfa"/></svg></span><span class="b"><svg class="ic"><use href="#gtbl"/></svg></span></div>
      <div class="grp g1e"><i class="hd"></i><span class="b"><svg class="ic"><use href="#info"/></svg></span><span class="b"><svg class="ic"><use href="#tinfo"/></svg></span><span class="b"><svg class="ic"><use href="#rule"/></svg></span><span class="b"><svg class="ic"><use href="#broom"/></svg></span><span class="b"><svg class="ic"><use href="#sun"/></svg></span><span class="b"><svg class="ic"><use href="#bulb"/></svg></span><span class="b"><svg class="ic"><use href="#bars"/></svg></span><span class="b"><svg class="ic"><use href="#hour"/></svg></span><span class="b"><svg class="ic"><use href="#stop"/></svg></span></div>
    </div>
    <div class="tbrow r2">
      <div class="grp g2a"><i class="hd"></i><span class="b"><svg class="ic"><use href="#b1"/></svg></span><span class="b"><svg class="ic"><use href="#b2"/></svg></span><span class="b"><svg class="ic"><use href="#b3"/></svg></span><span class="b"><svg class="ic"><use href="#b4"/></svg></span><span class="b"><svg class="ic"><use href="#b5"/></svg></span><span class="b"><svg class="ic"><use href="#g1"/></svg></span><span class="b"><svg class="ic"><use href="#g2"/></svg></span></div>
      <div class="grp g2b"><i class="hd"></i><span class="b"><svg class="ic"><use href="#sL"/></svg></span><span class="b"><svg class="ic"><use href="#sS"/></svg></span><span class="b"><svg class="ic"><use href="#sC"/></svg></span><span class="b"><svg class="ic"><use href="#sel"/></svg></span><span class="b"><svg class="ic"><use href="#sN"/></svg></span><span class="b"><svg class="ic"><use href="#sP"/></svg></span><span class="b"><svg class="ic"><use href="#sH"/></svg></span><span class="b"><svg class="ic"><use href="#sO"/></svg></span><span class="b"><svg class="ic"><use href="#sD"/></svg></span><span class="b"><svg class="ic"><use href="#sX"/></svg></span></div>
      <div class="grp g2c"><i class="hd"></i><span class="b"><svg class="ic"><use href="#chip"/></svg></span><span class="b"><svg class="ic"><use href="#dimv"/></svg></span><span class="b"><svg class="ic"><use href="#dimh"/></svg></span></div>
      <div class="grp g2d"><i class="hd"></i><span class="b"><svg class="ic"><use href="#odb"/></svg></span><span class="b"><svg class="ic"><use href="#split"/></svg></span><span class="b"><svg class="ic"><use href="#wr"/></svg></span><span class="b"><svg class="ic"><use href="#cam"/></svg></span><span class="b"><svg class="ic"><use href="#rv"/></svg></span><span class="b"><svg class="ic"><use href="#lst"/></svg></span><span class="b"><svg class="ic"><use href="#dots"/></svg></span><span class="b"><svg class="ic"><use href="#tp"/></svg></span><span class="b"><svg class="ic"><use href="#nine"/></svg></span></div>
      <div class="grp g2e"><i class="hd"></i><span class="b"><svg class="ic"><use href="#nl"/></svg></span></div>
      <div class="grp g2f"><i class="hd"></i><span class="b"><svg class="ic"><use href="#si1"/></svg></span><span class="b"><svg class="ic"><use href="#si2"/></svg></span><span class="b"><svg class="ic"><use href="#si3"/></svg></span><span class="b"><svg class="ic"><use href="#si4"/></svg></span><span class="b"><svg class="ic"><use href="#si5"/></svg></span></div>
      <div class="grp g2g"><i class="hd"></i><span class="b"><svg class="ic"><use href="#nb"/></svg></span><span class="b"><svg class="ic"><use href="#bow"/></svg></span><span class="b"><svg class="ic"><use href="#win"/></svg></span></div>
    </div>
  </div>

  <main class="main">
    <aside class="dock">
      <div class="dg d1"><i class="hh"></i><span class="s"><svg class="ic"><use href="#l1"/></svg></span><span class="s"><svg class="ic"><use href="#l2"/></svg></span><span class="s"><svg class="ic"><use href="#l3"/></svg></span></div>
      <div class="dg d2"><i class="hh"></i><span class="s"><svg class="ic"><use href="#l4"/></svg></span><span class="s"><svg class="ic"><use href="#l5"/></svg></span><span class="s"><svg class="ic"><use href="#l6"/></svg></span><span class="s"><svg class="ic"><use href="#l7"/></svg></span><span class="s"><svg class="ic"><use href="#l8"/></svg></span><span class="s"><svg class="ic"><use href="#l9"/></svg></span><span class="s"><svg class="ic"><use href="#l10"/></svg></span><span class="s"><svg class="ic"><use href="#l11"/></svg></span></div>
      <div class="dg d3"><i class="hh"></i><span class="s"><svg class="ic"><use href="#ln"/></svg></span><span class="s"><svg class="ic"><use href="#sS"/></svg></span><span class="s"><svg class="ic"><use href="#ab1"/></svg></span><span class="s"><svg class="ic"><use href="#ab2"/></svg></span></div>
      <div class="dg d4"><i class="hh long"></i><span class="s"><svg class="ic"><use href="#n1"/></svg></span><span class="s"><svg class="ic"><use href="#net"/></svg></span><span class="s"><svg class="ic"><use href="#n3"/></svg></span><span class="s"><svg class="ic"><use href="#n4"/></svg></span><span class="s"><svg class="ic"><use href="#n5"/></svg></span><span class="s"><svg class="ic"><use href="#n6"/></svg></span><span class="s"><svg class="ic"><use href="#n7"/></svg></span><span class="s sw"><svg class="ic"><use href="#n8"/></svg><svg class="ic dropi"><use href="#drop"/></svg></span><span class="s"><svg class="ic"><use href="#n9"/></svg></span><span class="s"><svg class="ic"><use href="#n10"/></svg></span><span class="s"><svg class="ic"><use href="#n11"/></svg></span><span class="s"><svg class="ic"><use href="#n12"/></svg></span></div>
    </aside>

    <section class="find">
      <div class="fhead"><i class="fh"></i><span class="ftitle">Find</span><span class="fctl"><svg class="fpin" viewBox="0 0 10 10"><path d="M3 1h4v5H3zM1 6h8M5 6v4" fill="none" stroke="#222"/></svg><i class="farrow"></i><b class="fx">×</b></span></div>
      <div class="fbody">
        <fieldset class="fs fs1">
          <legend>Design Object Find Filter</legend>
          <div class="allrow"><span class="btn dis allon">All On</span><span class="btn dis alloff">All Off</span></div>
          <div class="fgrid">
            <label class="ck dis"><i class="cb"></i>Groups</label><label class="ck dis"><i class="cb"></i>Shapes</label>
            <label class="ck dis"><i class="cb"></i>Comps</label><label class="ck dis"><i class="cb"></i>Voids/Cavities</label>
            <label class="ck dis"><i class="cb"></i>Symbols</label><label class="ck dis"><i class="cb"></i>Cline segs</label>
            <label class="ck dis"><i class="cb"></i>Functions</label><label class="ck dis"><i class="cb"></i>Other segs</label>
            <label class="ck dis"><i class="cb"></i>Nets</label><label class="ck dis"><i class="cb"></i>Figures</label>
            <label class="ck dis"><i class="cb"></i>Pins</label><label class="ck dis"><i class="cb"></i>DRC errors</label>
            <label class="ck dis"><i class="cb"></i>Vias</label><label class="ck dis"><i class="cb"></i>Text</label>
            <label class="ck dis"><i class="cb"></i>Clines</label><label class="ck dis"><i class="cb"></i>Ratsnests</label>
            <label class="ck dis"><i class="cb"></i>Lines</label><label class="ck dis"><i class="cb"></i>Rat Ts</label>
          </div>
        </fieldset>
        <fieldset class="fs fs2">
          <legend>Find By Name</legend>
          <div class="fnrow1"><span class="sel s1"></span><span class="sel s2"></span></div>
          <div class="fnrow2"><span class="gt">&gt;</span><span class="fninput"></span><span class="btn dis more">More...</span></div>
        </fieldset>
        <span class="btn query">Find by Query...</span>
      </div>
    </section>

    <section class="work">
      <div class="canvas"></div>
      <div class="bottom">
        <div class="cmdpanel">
          <div class="strip"><b class="sx">×</b><i class="tri"></i><svg class="spin" viewBox="0 0 10 10"><path d="M1 3v4M1 5h5M6 2v6h3V2z" fill="none" stroke="#222"/></svg><span class="vtext">Command</span><i class="sdots"></i></div>
          <div class="cmdbox">
            <div class="cmdtext">Command &gt; m<br>W- Save Pending<br><br>Loading floor.cxt<br>Loading skillExt.cxt<br>Command &gt;</div>
            <div class="sbar"><i class="up"></i><i class="thumb"></i><i class="dn"></i></div>
          </div>
        </div>
        <div class="worldpanel">
          <div class="strip"><b class="sx">×</b><i class="tri"></i><svg class="spin" viewBox="0 0 10 10"><path d="M1 3v4M1 5h5M6 2v6h3V2z" fill="none" stroke="#222"/></svg><span class="vtext">WorldView</span><i class="sdots"></i></div>
          <div class="worldview"></div>
        </div>
      </div>
    </section>
  </main>

  <section class="dialog">
    <div class="dtitle">
      <svg class="dlogo"><use href="#dlogo"/></svg>
      <span class="dtext">Artwork Control Form</span>
      <div class="winbtns"><span class="wb wmin"><i></i></span><span class="wb wmax"><i></i></span><span class="wb wclose">✕</span></div>
    </div>
    <div class="client">
      <div class="tabs"><span class="tab on">Film Control</span><span class="tab">General Parameters</span></div>
      <div class="tabpanel">
        <fieldset class="fs films">
          <legend>Available films</legend>
          <div class="domrow"><span class="btn dom">Domain Selection</span><span class="btn dis miss">Create Missing Films</span></div>
          <div class="tree">
            <div class="tr"><i class="plus first"></i><i class="dash"></i><i class="cb"></i><svg class="fold"><use href="#foldr"/></svg><span>ADB</span></div>
            <div class="tr"><i class="plus"></i><i class="dash"></i><i class="cb"></i><svg class="fold"><use href="#foldr"/></svg><span>ADT</span></div>
            <div class="tr"><i class="plus"></i><i class="dash"></i><i class="cb"></i><svg class="fold"><use href="#foldr"/></svg><span>BOTTOM</span></div>
            <div class="tr"><i class="plus"></i><i class="dash"></i><i class="cb"></i><svg class="fold"><use href="#foldr"/></svg><span>DRILL</span></div>
            <div class="tr"><i class="plus"></i><i class="dash"></i><i class="cb"></i><svg class="fold"><use href="#foldr"/></svg><span>PASTBOT</span></div>
            <div class="tr"><i class="plus"></i><i class="dash"></i><i class="cb"></i><svg class="fold"><use href="#foldr"/></svg><span>PASTTOP</span></div>
            <div class="tr"><i class="plus"></i><i class="dash"></i><i class="cb"></i><svg class="fold"><use href="#foldr"/></svg><span>SILKBOT</span></div>
            <div class="tr"><i class="plus"></i><i class="dash"></i><i class="cb"></i><svg class="fold"><use href="#foldr"/></svg><span>SILKTOP</span></div>
            <div class="tr"><i class="plus"></i><i class="dash"></i><i class="cb"></i><svg class="fold"><use href="#foldr"/></svg><span>SOLDBOT</span></div>
            <div class="tr"><i class="plus"></i><i class="dash"></i><i class="cb"></i><svg class="fold"><use href="#foldr"/></svg><span>SOLDTOP</span></div>
            <div class="tr"><i class="plus"></i><i class="dash"></i><i class="cb"></i><svg class="fold"><use href="#foldr"/></svg><span>TOP</span></div>
          </div>
          <div class="filmbtns"><span class="btn bsel">Select all</span><span class="btn badd">Add...</span><span class="btn brep">Replace...</span></div>
          <label class="ck chkdb"><i class="cb on"><svg viewBox="0 0 12 12"><use href="#chk"/></svg></i>Check database before artwork</label>
          <span class="btn create">Create Artwork</span>
        </fieldset>
        <fieldset class="fs opts">
          <legend>Film options</legend>
          <div class="o first"><span class="ol">Film name:</span><span>ADB</span></div>
          <div class="o"><span class="ol">PDF Sequence:</span><span class="inp i29">11</span><span class="spinb"><i class="su"></i><i class="sd"></i></span></div>
          <div class="o"><span class="ol">Rotation:</span><span class="btn rot">0<i class="caret"></i></span></div>
          <div class="o mt11"><span class="ol ol100"><span class="off">Offset</span>X:</span><span class="inp i76">0.00</span></div>
          <div class="o"><span class="ol ol100"><span class="yl">Y:</span></span><span class="inp i76">0.00</span></div>
          <div class="o mt22"><span class="ol ol113">Undefined line width:</span><span class="inp i63">6.00</span></div>
          <div class="o"><span class="ol ol113">Shape bounding box:</span><span class="inp i63">100.00</span></div>
          <div class="o mt10"><span class="ol ol113">Plot mode:</span><i class="rad on"></i><span>Positive</span></div>
          <div class="o"><span class="ol ol113"></span><i class="rad"></i><span>Negative</span></div>
          <div class="checks">
            <label class="ck"><i class="cb"></i>Film mirrored</label>
            <label class="ck"><i class="cb"></i>Full contact thermal-reliefs</label>
            <label class="ck"><i class="cb"></i>Suppress unconnected pads</label>
            <label class="ck dis"><i class="cb"></i>Draw missing pad apertures</label>
            <label class="ck dis"><i class="cb"></i>Use aperture rotation</label>
            <label class="ck dis"><i class="cb"></i>Suppress shape fill</label>
            <label class="ck"><i class="cb on"><svg viewBox="0 0 12 12"><use href="#chk"/></svg></i>Vector based pad behavior</label>
            <label class="ck"><i class="cb"></i>Draw holes only</label>
          </div>
        </fieldset>
      </div>
      <div class="actions"><span class="btn ok">OK</span><span class="btn cancel">Cancel</span><span class="btn apert">Apertures...</span><span class="btn viewlog">Viewlog...</span><span class="btn help">Help</span></div>
      <div class="status"><span class="stcell"></span><span class="sttext">Read: D:/Cadence_100/Cadence Allegro SPB OrCAD 16.6&nbsp; te xunban 7 yue/kaike/zouye/201908/20190812-0818</span><i class="grip"></i></div>
    </div>
  </section>

  <svg class="marks" viewBox="0 0 1261 1023" aria-hidden="true">
    <ellipse cx="699" cy="345" rx="124" ry="112" fill="none" stroke="#ff2010" stroke-width="3"/>
    <ellipse cx="1074" cy="386" rx="114" ry="34" fill="none" stroke="#ff2010" stroke-width="3"/>
  </svg>
  <span class="watermark">PCB联盟网</span>
</div>
</body>
</html>
```
FILE: styles.css
```css
* { box-sizing: border-box; }
html, body { margin: 0; padding: 0; }
body { width: 1261px; height: 1023px; overflow: hidden; font-family: "Liberation Sans", Arial, sans-serif; font-size: 11.5px; letter-spacing: -.35px; color: #000; background: #d9dae2; }
i { display: block; font-style: normal; }
.defs { position: absolute; width: 0; height: 0; }
.app { position: relative; width: 1261px; height: 1023px; display: flex; flex-direction: column; overflow: hidden; }
.app::after { content: ""; position: absolute; left: 0; right: 0; bottom: 1px; height: 2px; background: #b4b4b8; }

.titlebar { height: 21px; display: flex; align-items: center; background: radial-gradient(ellipse 40px 18px at 790px 21px, rgba(255,255,255,.65), transparent), radial-gradient(ellipse 40px 18px at 860px 21px, rgba(255,255,255,.6), transparent), radial-gradient(ellipse 40px 16px at 250px 24px, rgba(255,180,180,.35), transparent), linear-gradient(90deg, #5a86b4 0, #3f78b4 300px, #1c62b0 600px, #2a6fbe 1000px, #2465b4 1261px); }
.tlogo { width: 18px; height: 18px; flex: none; margin-right: 4px; }
.ttext { font-family: "Liberation Sans", "Noto Sans CJK SC", sans-serif; font-size: 12.5px; letter-spacing: 0; padding-bottom: 2px; color: #111; text-shadow: 0 0 6px rgba(255,255,255,.9), 0 0 3px rgba(255,255,255,.8); white-space: nowrap; }

.menubar { height: 23px; display: flex; align-items: center; padding-bottom: 2px; background: #f0f0f0; border-bottom: 2px solid #d40000; font-size: 12.5px; letter-spacing: 0; color: #222; white-space: nowrap; }
.m { margin-left: 14.3px; }
.m0 { margin-left: 7px; }

.toolbars { height: 71px; background: #d9dae2; }
.tbrow { height: 35px; display: flex; }
.r1 { height: 34px; }
.grp { display: flex; align-items: center; padding-left: 3px; padding-bottom: 1px; flex: none; background: #dfe0e7; border-right: 1px solid #c8c8cc; border-bottom: 1px solid #c2c2c6; border-bottom-right-radius: 4px; }
.hd { width: 3px; height: 26px; margin-right: -1px; background: repeating-linear-gradient(180deg, #3c96ff 0 3px, transparent 3px 5px); flex: none; }
.b { width: 31px; height: 30px; display: flex; align-items: center; justify-content: center; flex: none; }
.w23 { width: 23px; }
.w26 { width: 26px; }
.w39 { width: 39px; }
.ic { width: 26px; height: 26px; flex: none; overflow: visible; letter-spacing: 0; }
.g1a { width: 107px; }
.g1b { width: 259px; }
.g1c { width: 355px; }
.g1d { width: 231px; }
.g1e { width: 290px; }
.g2a { width: 232px; }
.g2b { width: 324px; }
.g2c { width: 106px; }
.g2d { width: 293px; }
.g2e { width: 45px; }
.g2f { width: 168px; }
.g2g { width: 93px; }
.t3d { font: bold 19px "Liberation Sans", sans-serif; fill: #a9c4e4; stroke: #4d7fb8; stroke-width: .8; }
.tflip { font: bold 6px "Liberation Sans", sans-serif; fill: #fff; }
.tw { font: bold 6.500px "Liberation Sans", sans-serif; fill: #fff; }
.t123 { font: 10px "Liberation Sans", sans-serif; fill: #333; }
.todb { font: bold 7.500px "Liberation Sans", sans-serif; fill: #fff; }
.tsm { font: bold 6.500px "Liberation Mono", monospace; fill: #222; }
.ttp { font: bold 7.500px "Liberation Sans", sans-serif; fill: #222; }
.tu1 { font: bold 9px "Liberation Sans", sans-serif; fill: #a02828; }
.tabc { font: 14px "Liberation Sans", sans-serif; fill: #777; }

.main { flex: 1; min-height: 0; display: flex; }
.dock { width: 51px; flex: none; padding-top: 1px; border-right: 1px solid #6a6a6a; position: relative; }
.dg { display: flex; flex-direction: column; padding-top: 6px; }
.d1 { width: 34px; height: 106px; background: #dfe0e7; border-radius: 0 0 5px 0; border-right: 1px solid #c8c8cc; border-bottom: 1px solid #c2c2c6; }
.d2 { width: 34px; height: 260px; background: #dfe0e7; border-radius: 0 0 5px 0; border-right: 1px solid #c8c8cc; border-bottom: 1px solid #c2c2c6; }
.d3 { width: 34px; height: 137px; margin-top: 21px; background: #dfe0e7; border-radius: 0 0 5px 0; border-right: 1px solid #c8c8cc; border-bottom: 1px solid #c2c2c6; }
.d4 { width: 48px; padding-top: 6px; border-right: 1px solid #c8c8cc; margin-top: 1px; height: 380px; }
.hh { height: 3px; width: 26px; margin: -4px 0 1px 5px; background: repeating-linear-gradient(90deg, #3c96ff 0 3px, transparent 3px 5px); flex: none; }
.hh.long { width: 39px; margin-top: -2px; margin-bottom: -1px; }
.s { height: 31px; display: flex; align-items: center; padding-left: 2px; flex: none; }
.d4 .s { padding-left: 10px; }
.d4 .s.sw { padding-left: 3px; width: 47px; }
.sw .ic:first-child { margin-right: 4px; width: 28px; height: 28px; }
.d4 .s.sw .dropi { width: 14px; height: 22px; }

.find { width: 259px; margin-left: 1px; flex: none; display: flex; flex-direction: column; background: #f0f0f0; }
.fhead { height: 17px; display: flex; align-items: flex-start; background: #dbdce4; position: relative; border-right: 1px solid #7a7a7a; }
.fh { width: 3px; height: 8px; margin: 2px 0 0 3px; background: repeating-linear-gradient(180deg, #3c96ff 0 3px, transparent 3px 5px); }
.ftitle { margin-left: 3px; line-height: 13px; }
.fctl { margin-left: auto; display: flex; align-items: center; margin-right: 4px; margin-top: 1px; }
.fpin { width: 9px; height: 9px; margin-right: 9px; margin-top: 3px; }
.farrow { width: 0; height: 0; border: 3px solid transparent; border-top-color: #777; border-bottom: 0; margin-right: 8px; }
.fx { font-size: 13px; line-height: 12px; }
.fbody { flex: 1; padding: 6px 0 0 8px; display: flex; flex-direction: column; align-items: flex-start; }
.fs { margin: 0; padding: 0; border: 1px solid #d9e2e8; border-radius: 3px; min-width: 0; }
.fs legend { padding: 0 3px; margin-left: -1px; line-height: 14px; color: #111; white-space: nowrap; }
.fs1 { width: 187px; height: 235px; padding: 5px 0 0 5px; }
.allrow { display: flex; }
.btn { display: flex; align-items: center; justify-content: center; height: 20px; border: 1px solid #707070; border-radius: 3px; background: linear-gradient(#f3f3f3 0, #ececec 48%, #d8d8d8 52%, #cfcfcf 100%); color: #111; white-space: nowrap; flex: none; }
.btn.dis { background: #f0f0f0; border-color: #b5b5b5; color: #8a8a8a; }
.allon { width: 43px; height: 14px; margin-left: 1px; }
.alloff { width: 47px; height: 14px; margin-left: 13px; }
.fgrid { display: grid; grid-template-columns: 84px 84px; grid-auto-rows: 22px; margin-top: 4px; }
.ck { display: flex; align-items: center; gap: 4px; white-space: nowrap; color: #222; }
.ck.dis { color: #7f7f7f; }
.cb { width: 12px; height: 12px; flex: none; border: 1px solid #8e8f8f; background: linear-gradient(135deg, #e0e0e0, #f8f8f8); box-shadow: inset 0 0 0 1px #f4f4f4; }
.ck.dis .cb { border-color: #b5b5b5; background: #f0f0f0; }
.cb svg { display: block; width: 10px; height: 10px; }
.cb.on { background: #dfe6f5; }
.fs2 { width: 187px; height: 70px; margin-top: 7px; padding: 2px 0 0 5px; }
.fnrow1 { display: flex; gap: 4px; }
.sel { height: 20px; border: 1px solid #b5b5b5; border-radius: 2px; background: #f0f0f0; display: block; position: relative; }
.sel::after { content: ""; position: absolute; right: 5px; top: 7px; border: 4px solid transparent; border-top: 5px solid #9c9c9c; border-bottom: 0; }
.s1 { width: 122px; }
.s2 { width: 52px; }
.fnrow2 { display: flex; align-items: flex-start; margin-top: 3px; }
.gt { width: 15px; line-height: 20px; padding-left: 1px; color: #222; }
.fninput { width: 107px; height: 21px; border: 1px solid #b5b5b5; box-shadow: inset 1px 1px 0 #8a8a8a; background: #efefef; }
.more { width: 48px; margin: 2px 0 0 5px; }
.query { width: 89px; margin-top: 15px; }

.work { flex: 1; min-width: 0; display: flex; flex-direction: column; padding-left: 9px; }
.canvas { height: 806px; background: #000; position: relative; flex: none; }
.canvas::before { content: ""; position: absolute; left: 361px; top: 0; bottom: 0; width: 1px; background: #fff; }
.canvas::after { content: ""; position: absolute; left: 0; right: 0; top: 783px; height: 1px; background: #fff; }
.bottom { display: flex; margin-top: 7px; height: 88px; gap: 5px; }
.cmdpanel { width: 665px; flex: none; display: flex; border-bottom: 2px solid #8f8f8f; }
.strip { width: 17px; flex: none; display: flex; flex-direction: column; align-items: center; position: relative; overflow: hidden; background: #d9dae2; }
.sx { font-size: 13px; line-height: 14px; margin-top: 1px; flex: none; }
.tri { width: 0; height: 0; margin-top: 4px; border: 3px solid transparent; border-right: 4px solid #222; border-left: 0; flex: none; }
.spin { width: 9px; height: 9px; margin-top: 10px; flex: none; }
.vtext { writing-mode: vertical-rl; transform: rotate(180deg); height: 36px; flex: none; overflow: hidden; font-family: "DejaVu Sans", sans-serif; font-size: 9.500px; letter-spacing: 0; line-height: 12px; white-space: nowrap; text-align: left; }
.sdots { width: 7px; height: 3px; margin-top: 2px; flex: none; background: repeating-linear-gradient(90deg, #3c96ff 0 3px, transparent 3px 4px); }
.cmdbox { flex: 1; min-width: 0; display: flex; height: 84px; }
.cmdtext { flex: 1; background: #fff; border: 1px solid #6a6a6a; padding-left: 1px; padding-top: 2px; line-height: 13px; color: #111; height: 85px; }
.sbar { width: 17px; flex: none; background: #f0f0f0; position: relative; display: flex; flex-direction: column; align-items: center; }
.up { margin-top: 5px; border: 4px solid transparent; border-bottom: 5px solid #8a8a8a; border-top: 0; }
.thumb { width: 15px; height: 17px; margin-top: 36px; background: linear-gradient(90deg, #eee, #dcdcdc); border: 1px solid #a0a0a0; border-radius: 2px; }
.dn { margin-top: 4px; border: 4px solid transparent; border-top: 5px solid #8a8a8a; border-bottom: 0; }
.worldpanel { flex: 1; min-width: 0; display: flex; }
.worldpanel .strip { width: 18px; }
.worldview { flex: 1; margin-top: 2px; background: #000; position: relative; height: 85px; border-bottom: 2px solid #fff; }
.worldview::before { content: ""; position: absolute; left: 91px; top: 0; bottom: 0; width: 1px; background: #fff; }

.dialog { position: absolute; left: 611px; top: 137px; width: 615px; height: 733px; background: linear-gradient(#2a2a2a, #0e0e0e 30px); border: 1px solid #6a6a6a; border-radius: 6px; padding: 0 5px 5px; box-shadow: inset 0 0 0 1px #222; display: flex; flex-direction: column; }
.dtitle { height: 26px; display: flex; align-items: center; position: relative; flex: none; }
.dlogo { width: 16px; height: 16px; margin-top: -1px; }
.dtext { margin-left: 6px; font-size: 13px; letter-spacing: .05px; color: #222; text-shadow: 0 0 5px #aaa, 0 0 7px #aaa, 0 0 9px #999, 0 0 12px #888; }
.winbtns { position: absolute; right: 1px; top: -1px; height: 19px; display: flex; border: 1px solid #777; border-top: 0; border-radius: 0 0 4px 4px; background: #1c1c1c; }
.wb { display: flex; align-items: center; justify-content: center; height: 18px; color: #eee; }
.wmin { width: 28px; border-right: 1px solid #666; }
.wmin i { width: 10px; height: 3px; margin-top: 6px; background: #eee; }
.wmax { width: 27px; border-right: 1px solid #666; }
.wmax i { width: 10px; height: 8px; border: 1px solid #eee; border-top-width: 3px; }
.wclose { width: 46px; font-size: 12px; font-weight: bold; letter-spacing: 0; }
.client { flex: 1; background: #f0f0f0; display: flex; flex-direction: column; padding-top: 13px; color: #111; }
.tabs { height: 21px; display: flex; align-items: flex-end; padding-left: 14px; flex: none; }
.tab { display: flex; align-items: center; justify-content: center; height: 19px; width: 101px; border: 1px solid #8a8a8a; border-bottom: 0; background: linear-gradient(#eee, #d8d8d8); margin-left: 3px; padding-top: 1px; white-space: nowrap; }
.tab.on { height: 21px; width: 67px; margin-left: 0; background: #fff; padding-top: 0; }
.tabpanel { height: 605px; margin-left: 14px; width: 572px; display: flex; align-items: flex-start; flex: none; background: #f0f0f0; border: 1px solid #9a9a9a; border-left-color: #fff; box-shadow: inset 0 0 0 1px #fff; padding: 8px 0 0 9px; gap: 15px; }
.films { width: 327px; height: 586px; padding: 0 6px 0 13px; }
.films legend { margin-left: -9px; }
.domrow { display: flex; justify-content: space-between; margin-top: 14px; }
.dom { width: 93px; }
.miss { width: 110px; }
.tree { width: 293px; height: 372px; margin-top: 2px; background: #fff; border: 1px solid #707070; box-shadow: inset 0 0 0 1px #e6e6e6; padding: 1px 0 0 8px; }
.tr { height: 16px; display: flex; align-items: center; letter-spacing: 0; }
.plus { width: 9px; height: 9px; border: 1px solid #8a8fa8; background: #eef0f6 linear-gradient(#4a5a8a, #4a5a8a) center/5px 1px no-repeat; position: relative; flex: none; }
.plus::before { content: ""; position: absolute; left: 1px; top: 1px; width: 5px; height: 5px; background: linear-gradient(#4a5a8a, #4a5a8a) center/1px 5px no-repeat; }
.plus::after { content: ""; position: absolute; left: 3px; top: -8px; height: 7px; border-left: 1px dotted #777; }
.plus.first::after { display: none; }
.dash { width: 9px; height: 0; border-top: 1px dotted #777; flex: none; }
.tr .cb { width: 12px; height: 12px; background: #fff; margin-right: 1px; }
.fold { width: 15px; height: 13px; flex: none; }
.tr span { margin-left: 6px; }
.filmbtns { display: flex; margin-top: 13px; }
.bsel { width: 60px; }
.badd { width: 61px; margin-left: 10px; }
.brep { width: 64px; margin-left: 9px; }
.chkdb { margin: 15px 0 0 6px; height: 14px; }
.create { width: 85px; height: 31px; margin: 39px 0 0 49px; }
.opts { width: 209px; height: 444px; }
.opts legend { margin-left: 5px; }
.o { display: flex; align-items: center; height: 22px; padding-left: 13px; }
.o.first { margin-top: 2px; }
.ol { width: 98px; flex: none; white-space: nowrap; }
.ol100 { width: 100px; }
.ol113 { width: 113px; }
.off { display: inline-block; width: 36px; }
.yl { margin-left: 38px; }
.mt10 { margin-top: 10px; }
.mt11 { margin-top: 11px; }
.mt22 { margin-top: 22px; }
.inp { display: block; height: 20px; line-height: 17px; padding-left: 2px; letter-spacing: 0; background: #fff; border: 1px solid #e3e3e3; border-top: 2px solid #6a6a6a; border-left: 2px solid #6a6a6a; flex: none; }
.i29 { width: 29px; margin-left: 1px; }
.i76 { width: 76px; }
.i63 { width: 63px; }
.spinb { width: 16px; height: 20px; margin-left: 1px; border: 1px solid #c8c8c8; background: #e8e8e8; display: flex; flex-direction: column; justify-content: space-around; align-items: center; }
.su { border: 3px solid transparent; border-bottom: 4px solid #5a74b0; border-top: 0; }
.sd { border: 3px solid transparent; border-top: 4px solid #5a74b0; border-bottom: 0; }
.rot { width: 45px; justify-content: flex-start; padding-left: 5px; position: relative; }
.caret { position: absolute; right: 6px; top: 7px; border: 4px solid transparent; border-top: 5px solid #111; border-bottom: 0; }
.rad { width: 11px; height: 11px; border-radius: 50%; border: 1px solid #8a8a8a; background: radial-gradient(circle, #ddd, #bbb); margin-right: 4px; flex: none; }
.rad.on { background: radial-gradient(circle, #0a63c0 0 2.500px, #fff 3.500px); }
.checks { display: grid; grid-auto-rows: 22px; padding-left: 6px; }
.actions { display: flex; margin-top: 13px; height: 20px; padding-left: 23px; flex: none; }
.ok { width: 59px; background: linear-gradient(#e5f5fd 0, #c5e8f8 48%, #a0d8f4 52%, #bfe6f8 100%); border: 2px solid #2a9ad8; }
.cancel { width: 59px; margin-left: 25px; }
.apert { width: 69px; margin-left: 24px; }
.viewlog { width: 61px; margin-left: 22px; }
.help { width: 60px; margin-left: 86px; }
.status { height: 22px; margin-top: 6px; display: flex; align-items: center; border-top: 1px solid #a8a8a8; flex: none; background: #f0f0f0; }
.stcell { width: 34px; height: 21px; border-right: 1px solid #b8b8b8; flex: none; }
.sttext { margin-left: 4px; width: 547px; overflow: hidden; white-space: nowrap; }
.grip { width: 8px; height: 8px; margin: 10px 0 0 8px; background: repeating-linear-gradient(135deg, transparent 0 2px, #aaa 2px 3px); }

.marks { position: absolute; left: 0; top: 0; width: 1261px; height: 1023px; pointer-events: none; }
.watermark { position: absolute; right: 0; top: 997px; font-family: "Liberation Sans", "Noto Sans CJK SC", sans-serif; font-size: 21px; line-height: 26px; letter-spacing: 0; color: #e81010; }
```
